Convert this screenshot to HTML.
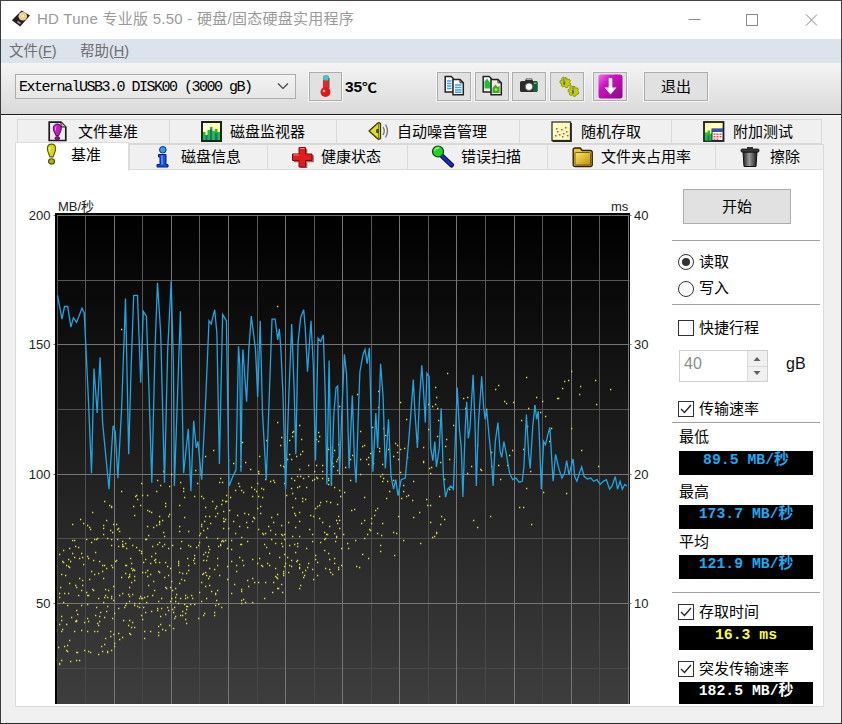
<!DOCTYPE html>
<html lang="zh-CN"><head><meta charset="utf-8"><title>HD Tune</title>
<style>
*{box-sizing:border-box}
html,body{margin:0;padding:0}
body{width:842px;height:724px;background:#f0f0f0;position:relative;overflow:hidden;font-family:"Liberation Sans","Noto Sans CJK SC",sans-serif;font-size:15px;color:#000;line-height:1}
.a{position:absolute;white-space:nowrap}
#title{left:1px;top:1px;width:840px;height:38px;background:#fff}
#ttext{left:37px;top:10px;font-size:15px;color:#9a9a9a;line-height:18px;letter-spacing:.26px}
#menu{left:1px;top:39px;width:840px;height:24px;background:#dde3ec}
.mi{top:43px;font-size:14.5px;color:#6e6e6e;line-height:17px}
#tool{left:1px;top:63px;width:840px;height:51px;background:linear-gradient(#f4f4f4,#d9d9d9)}
#tline{left:1px;top:114px;width:840px;height:1px;background:#1c1c1c}
#tline2{left:1px;top:115px;width:840px;height:1px;background:#fafafa}
.btn{background:#e1e1e1;border:1px solid #adadad;box-shadow:0 0 0 1px #f6f6f6}
#combo{left:15px;top:74px;width:281px;height:25px;background:#fff;border:1px solid #adadad;background:linear-gradient(#f2f2f2,#e6e6e6)}
#combotext{left:19px;top:79px;font-family:"Liberation Mono",monospace;font-size:15px;letter-spacing:-1.5px;line-height:17px;color:#000}
.tab{height:25px;background:#f0f0f0;border:1px solid #d9d9d9;font-size:15px}
.tl{font-size:15px;line-height:18px;color:#000}
#page{left:15px;top:169px;width:809px;height:538px;background:#fff;border:1px solid #dcdcdc}
.lbl{font-size:13px;line-height:14px;color:#222}
.sep{height:1px;background:#a0a0a0;left:672px;width:148px}
.box{left:679px;width:134px;height:24px;background:#000;text-align:center;font-family:"Liberation Mono","Noto Sans CJK SC",monospace;font-weight:bold;font-size:14.8px;line-height:19px;color:#1fa9f0}
.cb{left:678px;width:16px;height:16px;border:1px solid #333;background:#fff}
.rd{left:678px;width:16px;height:16px;border:1px solid #333;background:#fff;border-radius:50%}
.pt{left:699px;font-size:15px;line-height:18px}
</style></head><body>
<div class="a" id="title"></div>
<svg class="a" style="left:11px;top:10px" width="20" height="18" viewBox="0 0 20 18"><path d="M10.600 .4L19 5.400 9.200 16.600 .8 10.200z" fill="#231f20"/><circle cx="11.800" cy="6.200" r="4.300" fill="#e9cf92"/><circle cx="11.800" cy="6.200" r="1.400" fill="#f6e6b8"/><path d="M6.500 11.500l3 2.200" stroke="#a89aa8" stroke-width="1.600"/></svg>
<div class="a" id="ttext">HD Tune 专业版 5.50 - 硬盘/固态硬盘实用程序</div>
<svg class="a" style="left:680px;top:8px" width="150" height="24" viewBox="0 0 150 24" fill="none" stroke="#8a8a8a" stroke-width="1"><path d="M8.5 11.5h12"/><rect x="66.5" y="6.5" width="11" height="11"/><path d="M126 6.500l11 11M137 6.500l-11 11"/></svg>
<div class="a" id="menu"></div>
<div class="a mi" style="left:9px">文件(<u>F</u>)</div>
<div class="a mi" style="left:80px">帮助(<u>H</u>)</div>
<div class="a" id="tool"></div>
<div class="a" id="tline"></div><div class="a" id="tline2"></div>
<div class="a" id="combo"></div>
<div class="a" id="combotext">ExternalUSB3.0 DISK00 (3000 gB)</div>
<svg class="a" style="left:277px;top:82px" width="12" height="8" viewBox="0 0 12 8" fill="none" stroke="#444" stroke-width="1.2"><path d="M1 1.5l5 5 5-5"/></svg>
<div class="a btn" style="left:309px;top:72px;width:33px;height:29px"></div>
<svg class="a" style="left:318px;top:74px" width="16" height="24" viewBox="0 0 16 24"><rect x="5" y="1.5" width="6" height="15" rx="2" fill="#e22"/><rect x="5" y="1.5" width="6" height="5" rx="2" fill="#3cc"/><circle cx="7.5" cy="18" r="5" fill="#e01818"/><circle cx="6" cy="17" r="1.3" fill="#fbb"/><path d="M11 4v10" stroke="#555" stroke-width="1"/></svg>
<div class="a" style="left:345px;top:78px;font-weight:bold;font-size:15.5px;line-height:17px">35<span style="display:inline-block;transform:scale(.97,.82);transform-origin:0 72%">℃</span></div>

<div class="a btn" style="left:437px;top:72px;width:34px;height:29px"></div>
<div class="a btn" style="left:475px;top:72px;width:34px;height:29px"></div>
<div class="a btn" style="left:512px;top:72px;width:34px;height:29px"></div>
<div class="a btn" style="left:550px;top:72px;width:34px;height:29px"></div>
<div class="a btn" style="left:593px;top:72px;width:34px;height:29px"></div>
<div class="a btn" style="left:644px;top:72px;width:64px;height:29px;text-align:center;font-size:15px;line-height:27px">退出</div>
<!-- toolbar icons -->
<svg class="a" style="left:444px;top:75px" width="22" height="22" viewBox="0 0 22 22"><path d="M1.200 1.500h6l2.300 2.300v13.200h-8.300z" fill="#fff" stroke="#222" stroke-width="1.500"/><path d="M3 6h4.500M3 8.500h4.500M3 11h4.500M3 13.500h4.500" stroke="#3c9cf0" stroke-width="1.400"/><path d="M9 4.500h7l3.300 3.300v12h-10.300z" fill="#fff" stroke="#222" stroke-width="1.500"/><path d="M16 4.500v3.300h3.300" fill="none" stroke="#222" stroke-width="1"/><path d="M11 10h6.500M11 12.500h6.500M11 15h6.500M11 17.300h6.500" stroke="#3c9cf0" stroke-width="1.500"/></svg>
<svg class="a" style="left:482px;top:75px" width="22" height="22" viewBox="0 0 22 22"><path d="M1.200 1.500h6l2.300 2.300v13.200h-8.300z" fill="#fff" stroke="#222" stroke-width="1.500"/><path d="M2.500 6.500l2.500-3 3 4v6h-5.500z" fill="#20c030"/><path d="M9 4.500h7l3.300 3.300v12h-10.300z" fill="#f4e6e0" stroke="#222" stroke-width="1.500"/><path d="M16 4.500v3.300h3.300" fill="none" stroke="#222" stroke-width="1"/><path d="M10.500 18v-5l3-3.500 2 2.500 2 -1v7z" fill="#30b030"/><circle cx="14" cy="14.500" r="1.500" fill="#c8d020"/></svg>
<svg class="a" style="left:518px;top:76px" width="22" height="20" viewBox="0 0 22 20"><path d="M2 6.500q0-1.500 1.500-1.500h3.500l1-2.500h6l1 2.500h3q1.500 0 1.500 1.500v8q0 1.500-1.500 1.500h-14.500q-1.500 0-1.500-1.500z" fill="#2b2b2b"/><path d="M15 5h3q1.500 0 1.500 1.500v8q0 1.500-1.500 1.500h-3z" fill="#1f5a38"/><path d="M8.300 3.300h5.400" stroke="#ccc" stroke-width="1"/><circle cx="11" cy="10.700" r="3.700" fill="#fff" stroke="#555" stroke-width="0.800"/><rect x="16" y="6.500" width="2.500" height="1.500" fill="#4c6"/></svg>
<svg class="a" style="left:555px;top:74px" width="26" height="26" viewBox="0 -0.6 22.5 22.5"><g fill="#c3cf00" stroke="#8a9400" stroke-width="0.800"><path d="M8.500 2.500l1.800.3.300 1.600 1.700-.6 1.100 1.500-1 1.300 1.300 1.100-.6 1.700-1.700-.1-.4 1.700-1.800.3-.9-1.500-1.600.8-1.400-1.200.6-1.600-1.600-.7.100-1.800 1.700-.5-.3-1.700 1.500-1 1.300 1.200z"/><path d="M15.500 10l1.800.3.300 1.600 1.700-.6 1.100 1.500-1 1.300 1.300 1.100-.6 1.700-1.700-.1-.4 1.700-1.800.3-.9-1.500-1.600.8-1.400-1.200.6-1.600-1.600-.7.100-1.800 1.700-.5-.3-1.700 1.500-1 1.300 1.200z"/></g><path d="M8 3v6M15.500 10.500v6" stroke="#666" stroke-width="1.600"/><path d="M8 3v3M15.500 10.500v3" stroke="#bbb" stroke-width="0.800"/></svg>
<svg class="a" style="left:598px;top:74px" width="25" height="25" viewBox="0 0 25 25"><defs><linearGradient id="mg" x1="0" y1="0" x2="1" y2="1"><stop offset="0" stop-color="#f070e8"/><stop offset=".35" stop-color="#cc12c0"/><stop offset="1" stop-color="#8a0a86"/></linearGradient></defs><rect x=".5" y=".5" width="24" height="24" rx="2.500" fill="url(#mg)"/><path d="M10.700 4h3.600v9.500h4.200l-6 7-6-7h4.200z" fill="#fff"/></svg>


<!-- tabs row 1 -->
<div class="a tab" style="left:17px;top:119px;width:153px"></div>
<div class="a tab" style="left:169px;top:119px;width:168px"></div>
<div class="a tab" style="left:336px;top:119px;width:184px"></div>
<div class="a tab" style="left:519px;top:119px;width:153px"></div>
<div class="a tab" style="left:671px;top:119px;width:151px"></div>
<!-- tabs row 2 -->
<div class="a tab" style="left:129px;top:144px;width:139px;height:26px"></div>
<div class="a tab" style="left:267px;top:144px;width:141px;height:26px"></div>
<div class="a tab" style="left:407px;top:144px;width:141px;height:26px"></div>
<div class="a tab" style="left:547px;top:144px;width:169px;height:26px"></div>
<div class="a tab" style="left:715px;top:144px;width:109px;height:26px"></div>
<div class="a" id="page"></div>
<div class="a" style="left:15px;top:142px;width:114px;height:29px;background:#fff;border:1px solid #dcdcdc;border-bottom:none"></div>

<div class="a tl" style="left:78px;top:123px">文件基准</div>
<div class="a tl" style="left:230px;top:123px">磁盘监视器</div>
<div class="a tl" style="left:397px;top:123px">自动噪音管理</div>
<div class="a tl" style="left:581px;top:123px">随机存取</div>
<div class="a tl" style="left:733px;top:123px">附加测试</div>
<div class="a tl" style="left:71px;top:146px">基准</div>
<div class="a tl" style="left:181px;top:148px">磁盘信息</div>
<div class="a tl" style="left:321px;top:148px">健康状态</div>
<div class="a tl" style="left:461px;top:148px">错误扫描</div>
<div class="a tl" style="left:601px;top:148px">文件夹占用率</div>
<div class="a tl" style="left:770px;top:148px">擦除</div>
<!-- tab icons -->
<svg class="a" style="left:48px;top:121px" width="20" height="21" viewBox="0 0 20 21"><path d="M1.200 1.200h11.800l4.800 4.800v13.500h-16.600z" fill="#ececec" stroke="#1c1c1c" stroke-width="1.700"/><path d="M13 1.200v4.800h4.800" fill="#bbb" stroke="#1c1c1c" stroke-width="1"/><path d="M9.300 3c2.600 0 4 1.800 4 4.200 0 2.800-1.600 5-2.600 7.400h-2.800c-1-2.400-2.600-4.600-2.600-7.400 0-2.400 1.400-4.200 4-4.200z" fill="#c41cc4" stroke="#4a0a4a" stroke-width="1"/><ellipse cx="9.300" cy="17.300" rx="2.300" ry="1.700" fill="#a010a0" stroke="#3a083a" stroke-width=".9"/><path d="M8 5.500q-1 1.500-.3 4" stroke="#f2a0f2" stroke-width="1" fill="none"/></svg>
<svg class="a" style="left:46px;top:143px" width="11" height="22.500" viewBox="0 0 12 23" preserveAspectRatio="none"><path d="M6 1.200c2.900 0 4.500 2 4.500 4.700 0 3-1.700 5.500-2.800 8.200h-3.400c-1.100-2.700-2.800-5.200-2.800-8.200 0-2.700 1.600-4.700 4.500-4.700z" fill="#d6d61a" stroke="#5a5a00" stroke-width="1.200"/><ellipse cx="6" cy="18.800" rx="3.200" ry="2.700" fill="#b4b410" stroke="#4a4a00" stroke-width="1.200"/><path d="M4.500 4q-1.200 2-.3 5" stroke="#f6f690" stroke-width="1.200" fill="none"/></svg>
<svg class="a" style="left:201px;top:121px" width="21" height="21" viewBox="0 0 21 21"><defs><linearGradient id="my" x1="0" y1="0" x2="1" y2="1"><stop offset="0" stop-color="#fff"/><stop offset=".5" stop-color="#ffffa8"/><stop offset="1" stop-color="#fff"/></linearGradient></defs><rect x="1" y="1" width="19" height="19" fill="url(#my)" stroke="#14241a" stroke-width="1.800"/><path d="M2 19v-8h2.500v3h2v-5h2.500v-3h2.500v4h2.500v-2h2.500v3h2.500v8z" fill="#1cc41c"/><path d="M4.500 19v-5h2v5zM9 19v-11h2v11zM14 19v-7h2.500v7z" fill="#2464b8"/><rect x="1" y="1" width="19" height="19" fill="none" stroke="#14241a" stroke-width="1.800"/></svg>
<svg class="a" style="left:368px;top:121px" width="22" height="20" viewBox="0 0 22 20"><path d="M1 10l9.500-8.500 2 .8v15.400l-2 .8z" fill="#dede22" stroke="#3a3a00" stroke-width="1.300" stroke-linejoin="round"/><path d="M10.500 1.500v17" stroke="#77770a" stroke-width="1"/><ellipse cx="9.500" cy="10" rx="1.500" ry="2.300" fill="#444"/><path d="M15 6q2.500 4 0 8M17.500 3.500q4 6.500 0 13" fill="none" stroke="#777" stroke-width="1.400"/></svg>
<svg class="a" style="left:551px;top:121px" width="21" height="21" viewBox="0 0 21 21"><rect x="1" y="1" width="18.500" height="18.500" fill="#ffffc4" stroke="#333" stroke-width="1.300"/><path d="M20 2v18.300h-18.500" fill="none" stroke="#222" stroke-width="1.700"/><g fill="#e04020"><rect x="4" y="14" width="1.500" height="1.500"/><rect x="6" y="10" width="1.500" height="1.500"/><rect x="8" y="13" width="1.500" height="1.500"/><rect x="10" y="8" width="1.500" height="1.500"/><rect x="12" y="12" width="1.500" height="1.500"/><rect x="14" y="6" width="1.500" height="1.500"/><rect x="15" y="10" width="1.500" height="1.500"/><rect x="11" y="15" width="1.500" height="1.500"/><rect x="5" y="7" width="1.500" height="1.500"/><rect x="16" y="14" width="1.500" height="1.500"/></g></svg>
<svg class="a" style="left:703px;top:121px" width="22" height="21" viewBox="0 0 22 21"><rect x="1" y="1" width="19.500" height="19" fill="#ffffb8" stroke="#1c1c1c" stroke-width="1.800"/><path d="M2 19.500v-8h2.500v-2h2.500v3h2v7z" fill="#1cc41c"/><path d="M4.500 19.500v-5h2v5z" fill="#2464b8"/><rect x="9" y="8" width="11" height="11.500" fill="#fff" stroke="#223" stroke-width="1"/><rect x="9" y="8" width="11" height="3" fill="#2850c0"/><g fill="#e05050"><rect x="10.500" y="12.500" width="2" height="1.500"/><rect x="13.500" y="12.500" width="2" height="1.500"/><rect x="16.500" y="12.500" width="2" height="1.500"/><rect x="10.500" y="15" width="2" height="1.500"/><rect x="13.500" y="15" width="2" height="1.500"/><rect x="16.500" y="15" width="2" height="1.500"/><rect x="10.500" y="17.500" width="2" height="1.300"/><rect x="13.500" y="17.500" width="2" height="1.300"/></g></svg>
<svg class="a" style="left:156px;top:146px" width="13" height="22" viewBox="0 0 13 22"><circle cx="6.800" cy="3.800" r="3.300" fill="#2aa0f0" stroke="#0a2a80" stroke-width="1"/><path d="M2.500 8.500h7.500v10h2v2.500h-11v-2.500h3v-7.500h-1.500z" fill="#1850d8" stroke="#081c70" stroke-width="1" stroke-linejoin="round"/><path d="M6 9.500v9" stroke="#50a0ff" stroke-width="1.500"/></svg>
<svg class="a" style="left:291px;top:146px" width="23" height="22" viewBox="0 0 23 22"><path d="M8.500 2h7v6.500h6.500v7h-6.500v6.500h-7v-6.500h-6.500v-7h6.500z" fill="#5a0a0a" transform="translate(.8 .8)" opacity=".6"/><path d="M8 1.500h6.500v6.500h6.500v6.500h-6.500v6.500h-6.500v-6.500h-6.500v-6.500h6.500z" fill="#e21c1c" stroke="#7a0c0c" stroke-width="1"/><path d="M9 2.500h4.500M2.500 9h5.500" stroke="#ff8a8a" stroke-width="1"/></svg>
<svg class="a" style="left:431px;top:145px" width="24" height="23" viewBox="0 0 24 23"><path d="M10.500 10.500l10 9.500" stroke="#0a0a50" stroke-width="5" stroke-linecap="round"/><path d="M10.500 10.500l10 9.500" stroke="#1c2cb8" stroke-width="3" stroke-linecap="round"/><circle cx="7" cy="6.500" r="5.500" fill="#22d422" stroke="#0a400a" stroke-width="1.200"/><path d="M3.500 5.500q1.500-3 4.500-2.500" stroke="#b0ffb0" stroke-width="1.300" fill="none"/></svg>
<svg class="a" style="left:572px;top:146px" width="22" height="22" viewBox="0 0 22 22"><defs><linearGradient id="fg" x1="0" y1="0" x2="1" y2="1"><stop offset="0" stop-color="#fae66a"/><stop offset="1" stop-color="#c48e08"/></linearGradient></defs><path d="M1.200 4q0-2 2-2h5l2 2.500h8q2 0 2 2v12q0 2-2 2h-15q-2 0-2-2z" fill="#e8c83a" stroke="#2a2000" stroke-width="1.400"/><rect x="3" y="6.500" width="15.500" height="12.500" rx="1" fill="url(#fg)" stroke="#5a4400" stroke-width=".8"/></svg>
<svg class="a" style="left:740px;top:146px" width="20" height="22" viewBox="0 0 20 22"><defs><linearGradient id="tg" x1="0" y1="0" x2="1" y2="0"><stop offset="0" stop-color="#222"/><stop offset=".45" stop-color="#9a9a9a"/><stop offset="1" stop-color="#1a1a1a"/></linearGradient></defs><path d="M3 6h14l-1 14.500h-12z" fill="url(#tg)" stroke="#111" stroke-width="1"/><rect x="1" y="3" width="18" height="3" rx="1" fill="#3a3a3a" stroke="#111" stroke-width=".8"/><rect x="7" y="1" width="6" height="2.300" fill="#333"/></svg>


<!-- chart labels -->
<div class="a lbl" style="left:58px;top:200px">MB/秒</div>
<div class="a lbl" style="left:611px;top:200px">ms</div>
<div class="a lbl" style="left:20.500px;top:209px;width:30px;text-align:right">200</div>
<div class="a lbl" style="left:20.500px;top:338px;width:30px;text-align:right">150</div>
<div class="a lbl" style="left:20.500px;top:468px;width:30px;text-align:right">100</div>
<div class="a lbl" style="left:20.500px;top:597px;width:30px;text-align:right">50</div>
<div class="a lbl" style="left:634px;top:209px">40</div>
<div class="a lbl" style="left:634px;top:338px">30</div>
<div class="a lbl" style="left:634px;top:468px">20</div>
<div class="a lbl" style="left:634px;top:597px">10</div>
<svg id="chart" width="582" height="491" viewBox="52 213 582 491" style="position:absolute;left:52px;top:213px">
<defs><linearGradient id="bg" x1="0" y1="0" x2="0" y2="1"><stop offset="0" stop-color="#000"/><stop offset="1" stop-color="#3e3e3e"/></linearGradient><linearGradient id="mn" gradientUnits="userSpaceOnUse" x1="0" y1="215" x2="0" y2="704"><stop offset="0" stop-color="#5a5a5a"/><stop offset="1" stop-color="#474747"/></linearGradient></defs>
<rect x="55" y="213" width="575" height="491" fill="#000"/>
<rect x="57" y="215" width="572.5" height="491" fill="url(#bg)"/>
<path d="M57.5 215V704M85.5 215V704M142.5 215V704M199.5 215V704M257.5 215V704M314.5 215V704M371.5 215V704M428.5 215V704M485.5 215V704M542.5 215V704M599.5 215V704M57 280.5H629.5M57 409.5H629.5M57 538.5H629.5M57 668.5H629.5" stroke="url(#mn)" stroke-width="1" fill="none"/>
<path d="M114.5 215V704M171.5 215V704M228.5 215V704M285.5 215V704M342.5 215V704M399.5 215V704M456.5 215V704M514.5 215V704M571.5 215V704M628.5 215V704M57 215.5H629.5M57 344.5H629.5M57 474.5H629.5M57 603.5H629.5M53.5 215.5H55M53.5 344.5H55M53.5 474.5H55M53.5 603.5H55M630 215.5h1.5M630 344.5h1.5M630 474.5h1.5M630 603.5h1.5" stroke="#767676" stroke-width="1" fill="none"/>
<path d="M151 611.5h1.3M79 578.5h1.3M75 585.5h1.3M182 615.5h1.3M180 482.5h1.3M122 546.5h1.3M338 567.5h1.3M141 615.5h1.3M147 495.5h1.3M225 501.5h1.3M215 605.5h1.3M117 529.5h1.3M148 535.5h1.3M144 597.5h1.3M209 568.5h1.3M92 589.5h1.3M102 571.5h1.3M250 469.5h1.3M309 529.5h1.3M229 510.5h1.3M299 469.5h1.3M259 456.5h1.3M169 514.5h1.3M191 595.5h1.3M75 546.5h1.3M129 576.5h1.3M81 590.5h1.3M312 534.5h1.3M161 608.5h1.3M125 605.5h1.3M227 566.5h1.3M178 563.5h1.3M332 453.5h1.3M235 490.5h1.3M316 439.5h1.3M173 612.5h1.3M76 652.5h1.3M105 595.5h1.3M58 647.5h1.3M162 629.5h1.3M234 584.5h1.3M158 571.5h1.3M302 501.5h1.3M87 604.5h1.3M296 561.5h1.3M331 483.5h1.3M214 612.5h1.3M339 528.5h1.3M106 520.5h1.3M282 535.5h1.3M291 459.5h1.3M207 556.5h1.3M66 624.5h1.3M257 563.5h1.3M114 613.5h1.3M316 465.5h1.3M82 585.5h1.3M284 534.5h1.3M337 504.5h1.3M330 447.5h1.3M94 631.5h1.3M289 565.5h1.3M339 456.5h1.3M215 593.5h1.3M337 459.5h1.3M326 501.5h1.3M295 552.5h1.3M142 598.5h1.3M132 570.5h1.3M319 518.5h1.3M225 519.5h1.3M63 602.5h1.3M59 554.5h1.3M194 496.5h1.3M152 546.5h1.3M283 575.5h1.3M129 596.5h1.3M204 521.5h1.3M320 502.5h1.3M203 530.5h1.3M188 531.5h1.3M328 478.5h1.3M299 564.5h1.3M185 613.5h1.3M79 558.5h1.3M315 555.5h1.3M247 580.5h1.3M336 537.5h1.3M172 545.5h1.3M297 560.5h1.3M206 560.5h1.3M149 511.5h1.3M217 538.5h1.3M153 527.5h1.3M76 621.5h1.3M282 546.5h1.3M179 583.5h1.3M322 478.5h1.3M84 650.5h1.3M180 615.5h1.3M240 466.5h1.3M304 575.5h1.3M188 565.5h1.3M324 532.5h1.3M209 576.5h1.3M104 644.5h1.3M148 585.5h1.3M141 553.5h1.3M158 632.5h1.3M62 561.5h1.3M112 567.5h1.3M89 527.5h1.3M200 474.5h1.3M203 560.5h1.3M261 488.5h1.3M158 626.5h1.3M78 547.5h1.3M105 638.5h1.3M308 465.5h1.3M128 594.5h1.3M103 578.5h1.3M334 533.5h1.3M147 576.5h1.3M168 548.5h1.3M116 560.5h1.3M134 627.5h1.3M70 661.5h1.3M125 543.5h1.3M273 480.5h1.3M310 515.5h1.3M341 548.5h1.3M243 599.5h1.3M314 471.5h1.3M291 566.5h1.3M203 498.5h1.3M67 645.5h1.3M88 558.5h1.3M253 517.5h1.3M287 459.5h1.3M212 501.5h1.3M269 553.5h1.3M134 515.5h1.3M270 530.5h1.3M254 489.5h1.3M100 612.5h1.3M145 539.5h1.3M75 621.5h1.3M257 483.5h1.3M206 537.5h1.3M92 512.5h1.3M339 406.5h1.3M190 546.5h1.3M118 546.5h1.3M208 578.5h1.3M198 618.5h1.3M199 542.5h1.3M98 598.5h1.3M299 588.5h1.3M299 567.5h1.3M263 534.5h1.3M345 467.5h1.3M181 579.5h1.3M87 525.5h1.3M327 534.5h1.3M205 586.5h1.3M332 463.5h1.3M328 480.5h1.3M72 553.5h1.3M274 482.5h1.3M72 524.5h1.3M194 563.5h1.3M270 481.5h1.3M218 546.5h1.3M104 617.5h1.3M201 582.5h1.3M344 492.5h1.3M113 634.5h1.3M84 622.5h1.3M221 541.5h1.3M208 552.5h1.3M76 620.5h1.3M94 574.5h1.3M306 548.5h1.3M129 574.5h1.3M332 574.5h1.3M262 497.5h1.3M170 587.5h1.3M102 565.5h1.3M328 449.5h1.3M277 514.5h1.3M69 548.5h1.3M322 465.5h1.3M95 615.5h1.3M258 582.5h1.3M209 516.5h1.3M122 541.5h1.3M145 559.5h1.3M243 565.5h1.3M334 450.5h1.3M64 593.5h1.3M179 583.5h1.3M324 539.5h1.3M155 562.5h1.3M115 561.5h1.3M336 520.5h1.3M124 607.5h1.3M143 607.5h1.3M178 603.5h1.3M119 639.5h1.3M171 598.5h1.3M272 592.5h1.3M167 566.5h1.3M107 651.5h1.3M159 572.5h1.3M294 513.5h1.3M194 558.5h1.3M113 586.5h1.3M67 605.5h1.3M278 588.5h1.3M76 610.5h1.3M333 466.5h1.3M264 544.5h1.3M59 664.5h1.3M194 555.5h1.3M181 541.5h1.3M111 545.5h1.3M150 574.5h1.3M81 630.5h1.3M129 633.5h1.3M217 558.5h1.3M312 569.5h1.3M201 496.5h1.3M125 573.5h1.3M251 487.5h1.3M299 536.5h1.3M165 503.5h1.3M129 601.5h1.3M312 480.5h1.3M172 590.5h1.3M246 522.5h1.3M299 425.5h1.3M142 619.5h1.3M337 470.5h1.3M165 587.5h1.3M329 559.5h1.3M236 571.5h1.3M99 621.5h1.3M230 497.5h1.3M61 620.5h1.3M111 596.5h1.3M286 495.5h1.3M87 595.5h1.3M241 591.5h1.3M258 529.5h1.3M146 539.5h1.3M178 565.5h1.3M267 563.5h1.3M317 506.5h1.3M175 601.5h1.3M216 600.5h1.3M164 544.5h1.3M139 550.5h1.3M89 579.5h1.3M335 541.5h1.3M329 569.5h1.3M169 486.5h1.3M284 554.5h1.3M301 439.5h1.3M121 577.5h1.3M168 610.5h1.3M266 440.5h1.3M219 482.5h1.3M299 568.5h1.3M216 506.5h1.3M179 526.5h1.3M247 527.5h1.3M65 575.5h1.3M126 565.5h1.3M194 604.5h1.3M182 611.5h1.3M204 613.5h1.3M82 580.5h1.3M203 554.5h1.3M97 623.5h1.3M199 592.5h1.3M325 568.5h1.3M275 568.5h1.3M137 499.5h1.3M202 574.5h1.3M150 631.5h1.3M104 501.5h1.3M283 573.5h1.3M241 544.5h1.3M217 513.5h1.3M88 595.5h1.3M134 580.5h1.3M185 595.5h1.3M72 540.5h1.3M241 490.5h1.3M59 663.5h1.3M235 533.5h1.3M315 559.5h1.3M245 602.5h1.3M160 616.5h1.3M122 544.5h1.3M117 539.5h1.3M97 631.5h1.3M241 537.5h1.3M61 574.5h1.3M159 521.5h1.3M327 447.5h1.3M317 575.5h1.3M175 588.5h1.3M282 592.5h1.3M328 553.5h1.3M233 521.5h1.3M291 560.5h1.3M144 631.5h1.3M283 466.5h1.3M300 454.5h1.3M271 517.5h1.3M88 621.5h1.3M154 590.5h1.3M183 488.5h1.3M134 605.5h1.3M62 629.5h1.3M271 539.5h1.3M152 595.5h1.3M239 486.5h1.3M339 490.5h1.3M258 473.5h1.3M146 602.5h1.3M80 519.5h1.3M66 650.5h1.3M157 610.5h1.3M70 561.5h1.3M258 471.5h1.3M227 548.5h1.3M293 431.5h1.3M307 567.5h1.3M90 652.5h1.3M291 478.5h1.3M239 557.5h1.3M86 539.5h1.3M150 563.5h1.3M132 594.5h1.3M164 577.5h1.3M203 615.5h1.3M183 491.5h1.3M260 506.5h1.3M305 570.5h1.3M107 652.5h1.3M277 422.5h1.3M199 535.5h1.3M111 565.5h1.3M297 543.5h1.3M139 603.5h1.3M201 601.5h1.3M81 605.5h1.3M171 474.5h1.3M313 579.5h1.3M134 576.5h1.3M125 565.5h1.3M275 534.5h1.3M103 528.5h1.3M184 604.5h1.3M312 541.5h1.3M145 612.5h1.3M129 587.5h1.3M104 597.5h1.3M338 444.5h1.3M334 558.5h1.3M340 496.5h1.3M241 589.5h1.3M169 625.5h1.3M285 469.5h1.3M239 526.5h1.3M231 540.5h1.3M319 505.5h1.3M273 522.5h1.3M265 479.5h1.3M188 570.5h1.3M86 592.5h1.3M263 489.5h1.3M180 548.5h1.3M175 597.5h1.3M281 525.5h1.3M338 569.5h1.3M104 565.5h1.3M223 518.5h1.3M205 507.5h1.3M208 546.5h1.3M118 528.5h1.3M277 574.5h1.3M160 624.5h1.3M173 628.5h1.3M179 505.5h1.3M134 603.5h1.3M328 484.5h1.3M288 522.5h1.3M95 552.5h1.3M219 575.5h1.3M159 522.5h1.3M292 507.5h1.3M215 594.5h1.3M160 485.5h1.3M166 588.5h1.3M111 650.5h1.3M139 598.5h1.3M196 547.5h1.3M247 541.5h1.3M303 577.5h1.3M318 441.5h1.3M297 476.5h1.3M61 631.5h1.3M99 616.5h1.3M157 608.5h1.3M285 563.5h1.3M233 463.5h1.3M257 508.5h1.3M184 580.5h1.3M98 573.5h1.3M192 598.5h1.3M201 526.5h1.3M60 587.5h1.3M299 521.5h1.3M334 563.5h1.3M241 603.5h1.3M254 518.5h1.3M68 559.5h1.3M155 553.5h1.3M279 557.5h1.3M179 531.5h1.3M142 495.5h1.3M203 573.5h1.3M338 457.5h1.3M153 581.5h1.3M226 501.5h1.3M69 583.5h1.3M144 638.5h1.3M322 471.5h1.3M284 483.5h1.3M258 496.5h1.3M119 531.5h1.3M277 578.5h1.3M69 567.5h1.3M294 544.5h1.3M179 572.5h1.3M242 442.5h1.3M221 607.5h1.3M291 488.5h1.3M186 623.5h1.3M228 528.5h1.3M87 556.5h1.3M102 651.5h1.3M254 582.5h1.3M83 523.5h1.3M63 562.5h1.3M269 565.5h1.3M280 465.5h1.3M238 483.5h1.3M326 534.5h1.3M264 598.5h1.3M245 462.5h1.3M147 510.5h1.3M305 499.5h1.3M163 532.5h1.3M252 578.5h1.3M162 520.5h1.3M178 561.5h1.3M329 526.5h1.3M338 516.5h1.3M339 520.5h1.3M313 516.5h1.3M231 561.5h1.3M133 569.5h1.3M292 432.5h1.3M297 487.5h1.3M302 572.5h1.3M287 557.5h1.3M325 538.5h1.3M252 521.5h1.3M131 563.5h1.3M289 454.5h1.3M224 521.5h1.3M227 579.5h1.3M110 530.5h1.3M220 544.5h1.3M101 646.5h1.3M165 614.5h1.3M284 566.5h1.3M157 544.5h1.3M68 593.5h1.3M133 506.5h1.3M330 572.5h1.3M110 636.5h1.3M218 604.5h1.3M172 609.5h1.3M132 545.5h1.3M332 456.5h1.3M187 597.5h1.3M343 534.5h1.3M131 582.5h1.3M318 432.5h1.3M284 467.5h1.3M341 565.5h1.3M275 543.5h1.3M276 577.5h1.3M132 622.5h1.3M106 611.5h1.3M252 602.5h1.3M114 643.5h1.3M121 491.5h1.3M186 609.5h1.3M300 476.5h1.3M156 525.5h1.3M122 637.5h1.3M217 590.5h1.3M134 570.5h1.3M136 495.5h1.3M106 568.5h1.3M317 562.5h1.3M74 631.5h1.3M140 596.5h1.3M163 471.5h1.3M141 483.5h1.3M266 547.5h1.3M63 550.5h1.3M98 654.5h1.3M209 585.5h1.3M320 542.5h1.3M98 625.5h1.3M262 566.5h1.3M83 564.5h1.3M137 606.5h1.3M261 565.5h1.3M268 526.5h1.3M74 540.5h1.3M300 585.5h1.3M195 470.5h1.3M111 506.5h1.3M105 589.5h1.3M59 593.5h1.3M206 598.5h1.3M292 436.5h1.3M262 533.5h1.3M76 587.5h1.3M210 523.5h1.3M336 536.5h1.3M87 618.5h1.3M67 651.5h1.3M114 646.5h1.3M223 521.5h1.3M88 651.5h1.3M200 533.5h1.3M93 590.5h1.3M228 460.5h1.3M222 482.5h1.3M295 515.5h1.3M209 549.5h1.3M281 534.5h1.3M154 560.5h1.3M289 440.5h1.3M206 575.5h1.3M240 544.5h1.3M78 595.5h1.3M64 646.5h1.3M281 437.5h1.3M242 560.5h1.3M136 547.5h1.3M236 565.5h1.3M182 573.5h1.3M93 560.5h1.3M205 572.5h1.3M211 591.5h1.3M96 607.5h1.3M141 598.5h1.3M215 516.5h1.3M116 524.5h1.3M215 508.5h1.3M147 596.5h1.3M205 552.5h1.3M61 616.5h1.3M126 548.5h1.3M140 505.5h1.3M77 652.5h1.3M184 497.5h1.3M123 620.5h1.3M159 516.5h1.3M302 451.5h1.3M283 571.5h1.3M59 597.5h1.3M222 540.5h1.3M308 476.5h1.3M188 545.5h1.3M142 572.5h1.3M168 575.5h1.3M302 498.5h1.3M111 598.5h1.3M223 511.5h1.3M322 522.5h1.3M299 512.5h1.3M61 660.5h1.3M201 526.5h1.3M207 528.5h1.3M170 568.5h1.3M159 542.5h1.3M165 562.5h1.3M223 528.5h1.3M237 515.5h1.3M107 597.5h1.3M295 498.5h1.3M315 508.5h1.3M141 551.5h1.3M112 618.5h1.3M231 549.5h1.3M241 600.5h1.3M284 539.5h1.3M59 624.5h1.3M226 495.5h1.3M201 524.5h1.3M244 513.5h1.3M223 541.5h1.3M103 525.5h1.3M87 631.5h1.3M294 480.5h1.3M76 660.5h1.3M151 512.5h1.3M107 606.5h1.3M317 478.5h1.3M187 558.5h1.3M314 479.5h1.3M184 517.5h1.3M71 617.5h1.3M292 536.5h1.3M334 487.5h1.3M128 577.5h1.3M122 593.5h1.3M197 483.5h1.3M108 590.5h1.3M337 523.5h1.3M91 571.5h1.3M174 618.5h1.3M295 527.5h1.3M113 600.5h1.3M68 566.5h1.3M103 534.5h1.3M135 496.5h1.3M185 598.5h1.3M265 533.5h1.3M118 608.5h1.3M96 539.5h1.3M316 477.5h1.3M129 538.5h1.3M308 563.5h1.3M214 569.5h1.3M168 516.5h1.3M147 570.5h1.3M109 505.5h1.3M248 586.5h1.3M162 546.5h1.3M77 614.5h1.3M94 539.5h1.3M174 607.5h1.3M66 565.5h1.3M159 562.5h1.3M259 558.5h1.3M159 524.5h1.3M91 542.5h1.3M69 640.5h1.3M145 572.5h1.3M147 526.5h1.3M299 486.5h1.3M131 568.5h1.3M158 635.5h1.3M281 543.5h1.3M303 478.5h1.3M128 625.5h1.3M118 633.5h1.3M171 581.5h1.3M330 502.5h1.3M256 491.5h1.3M74 557.5h1.3M205 456.5h1.3M277 588.5h1.3M289 545.5h1.3M336 461.5h1.3M130 634.5h1.3M176 594.5h1.3M97 538.5h1.3M126 603.5h1.3M186 573.5h1.3M99 561.5h1.3M292 493.5h1.3M107 538.5h1.3M190 604.5h1.3M161 598.5h1.3M139 607.5h1.3M187 606.5h1.3M193 560.5h1.3M79 660.5h1.3M273 582.5h1.3M339 473.5h1.3M198 545.5h1.3M214 615.5h1.3M243 492.5h1.3M129 620.5h1.3M280 445.5h1.3M111 539.5h1.3M324 550.5h1.3M296 456.5h1.3M111 507.5h1.3M164 536.5h1.3M297 546.5h1.3M221 504.5h1.3M260 513.5h1.3M103 602.5h1.3M81 553.5h1.3M185 619.5h1.3M113 524.5h1.3M299 512.5h1.3M248 514.5h1.3M155 559.5h1.3M295 428.5h1.3M143 562.5h1.3M158 601.5h1.3M151 556.5h1.3M319 436.5h1.3M252 496.5h1.3M222 500.5h1.3M157 480.5h1.3M112 532.5h1.3M82 557.5h1.3M225 540.5h1.3M220 545.5h1.3M110 631.5h1.3M131 627.5h1.3M130 558.5h1.3M123 546.5h1.3M205 516.5h1.3M175 616.5h1.3M306 487.5h1.3M275 576.5h1.3M265 582.5h1.3M170 601.5h1.3M220 478.5h1.3M281 584.5h1.3M165 630.5h1.3M119 595.5h1.3M180 598.5h1.3M156 491.5h1.3M165 506.5h1.3M231 593.5h1.3M288 572.5h1.3M252 559.5h1.3M186 606.5h1.3M90 529.5h1.3M217 565.5h1.3M167 607.5h1.3M213 450.5h1.3M381 535.5h1.3M437 408.5h1.3M364 497.5h1.3M362 554.5h1.3M368 558.5h1.3M383 478.5h1.3M386 498.5h1.3M406 496.5h1.3M393 532.5h1.3M374 515.5h1.3M373 463.5h1.3M445 446.5h1.3M437 436.5h1.3M375 510.5h1.3M423 461.5h1.3M382 464.5h1.3M351 510.5h1.3M449 459.5h1.3M371 523.5h1.3M359 567.5h1.3M393 480.5h1.3M377 533.5h1.3M377 508.5h1.3M403 540.5h1.3M406 419.5h1.3M436 532.5h1.3M439 496.5h1.3M347 543.5h1.3M419 512.5h1.3M366 459.5h1.3M413 517.5h1.3M446 439.5h1.3M430 522.5h1.3M401 498.5h1.3M413 481.5h1.3M380 551.5h1.3M350 459.5h1.3M397 452.5h1.3M394 555.5h1.3M404 448.5h1.3M380 545.5h1.3M360 431.5h1.3M430 473.5h1.3M407 457.5h1.3M408 495.5h1.3M372 427.5h1.3M426 499.5h1.3M444 519.5h1.3M395 443.5h1.3M383 428.5h1.3M348 548.5h1.3M398 459.5h1.3M444 479.5h1.3M364 538.5h1.3M427 505.5h1.3M397 445.5h1.3M429 468.5h1.3M440 524.5h1.3M352 455.5h1.3M436 533.5h1.3M388 449.5h1.3M371 518.5h1.3M369 529.5h1.3M412 500.5h1.3M368 464.5h1.3M436 397.5h1.3M424 407.5h1.3M380 476.5h1.3M362 446.5h1.3M393 456.5h1.3M367 534.5h1.3M449 489.5h1.3M357 394.5h1.3M441 516.5h1.3M355 540.5h1.3M354 509.5h1.3M420 543.5h1.3M428 429.5h1.3M398 516.5h1.3M356 566.5h1.3M378 407.5h1.3M396 533.5h1.3M364 445.5h1.3M423 462.5h1.3M382 474.5h1.3M382 523.5h1.3M438 420.5h1.3M364 520.5h1.3M350 480.5h1.3M403 491.5h1.3M417 438.5h1.3M403 485.5h1.3M389 491.5h1.3M360 459.5h1.3M372 456.5h1.3M370 530.5h1.3M434 536.5h1.3M379 448.5h1.3M378 391.5h1.3M423 447.5h1.3M370 453.5h1.3M385 435.5h1.3M400 449.5h1.3M379 451.5h1.3M368 457.5h1.3M440 462.5h1.3M400 472.5h1.3M360 474.5h1.3M430 505.5h1.3M431 467.5h1.3M432 537.5h1.3M432 406.5h1.3M361 523.5h1.3M382 481.5h1.3M387 481.5h1.3M506 403.5h1.3M498 465.5h1.3M467 473.5h1.3M477 527.5h1.3M490 516.5h1.3M500 479.5h1.3M467 397.5h1.3M495 389.5h1.3M480 469.5h1.3M481 470.5h1.3M471 466.5h1.3M507 465.5h1.3M491 466.5h1.3M473 520.5h1.3M477 445.5h1.3M513 402.5h1.3M491 452.5h1.3M509 455.5h1.3M512 450.5h1.3M486 409.5h1.3M453 425.5h1.3M504 401.5h1.3M121 329.5h1.3M277 306.5h1.3M447 373.5h1.3M498 385.5h1.3M526 377.5h1.3M536 397.5h1.3M542 401.5h1.3M557 398.5h1.3M564 381.5h1.3M562 388.5h1.3M568 380.5h1.3M571 371.5h1.3M580 386.5h1.3M579 394.5h1.3M595 380.5h1.3M596 404.5h1.3M610 389.5h1.3M435 387.5h1.3M436 397.5h1.3M435 404.5h1.3M428 404.5h1.3M400 402.5h1.3M463 398.5h1.3M465 408.5h1.3M528 408.5h1.3M534 406.5h1.3M540 412.5h1.3M558 398.5h1.3M571 428.5h1.3M581 450.5h1.3M598 466.5h1.3M530 471.5h1.3M543 492.5h1.3M566 493.5h1.3M531 524.5h1.3M523 507.5h1.3M519 507.5h1.3M526 488.5h1.3M527 426.5h1.3M521 420.5h1.3M545 416.5h1.3M551 428.5h1.3M523 449.5h1.3M549 441.5h1.3" stroke="#dede42" stroke-width="1.3" fill="none"/>
<polyline points="57.5,295.4 62.0,319.2 64.5,306.5 67.7,306.5 70.9,327.2 73.4,317.7 76.6,322.4 82.0,308.1 84.2,312.9 85.8,344.7 88.3,397.1 91.5,473.3 94.0,368.5 97.2,413.0 100.1,357.4 102.6,422.5 109.0,489.2 113.1,425.7 115.3,432.0 117.9,478.1 121.7,406.6 125.5,298.6 128.7,454.3 131.2,365.3 133.7,295.4 137.5,295.4 140.7,382.8 143.3,311.3 146.4,316.1 148.7,381.2 151.8,482.8 155.0,349.4 157.5,282.7 160.7,333.5 164.5,482.8 167.7,349.4 171.2,281.1 173.4,365.3 174.4,486.0 180.4,311.3 183.6,473.3 188.3,428.8 190.9,491.1 193.7,420.9 196.3,447.9 197.9,441.5 201.7,479.7 205.8,397.1 209.0,320.8 211.2,324.0 214.7,309.7 216.9,333.5 219.4,464.1 222.6,314.5 226.4,320.8 229.0,486.0 232.8,476.5 236.0,470.1 238.5,346.2 239.8,365.3 241.0,471.7 242.3,365.3 242.9,349.4 246.6,401.8 248.8,349.4 251.3,316.1 253.9,336.7 255.5,349.4 257.7,397.1 260.2,320.8 262.5,413.0 266.3,479.7 269.8,381.2 272.0,319.2 275.2,319.2 277.7,339.9 279.3,328.8 280.9,349.4 283.1,397.1 285.6,489.2 288.8,397.1 291.7,324.0 294.2,390.7 295.8,454.3 298.0,343.1 300.6,317.7 303.7,309.7 305.3,328.8 307.5,371.7 311.0,320.8 313.3,365.3 315.5,460.6 318.0,338.3 320.6,341.5 323.4,335.1 325.3,397.1 326.9,484.4 329.1,360.5 331.3,486.0 333.9,413.0 336.1,387.5 337.7,386.0 339.6,473.3 341.8,413.0 344.4,354.2 346.6,374.8 349.1,468.5 352.3,395.5 354.5,460.6 356.1,482.8 358.7,403.4 359.9,371.7 363.1,354.2 365.0,349.4 367.2,363.7 369.4,347.8 371.3,422.5 372.9,471.7 375.8,413.0 377.7,447.9 380.6,363.7 383.1,397.1 385.3,468.5 388.5,419.3 391.0,476.5 393.6,489.2 395.8,479.7 398.0,495.6 401.2,479.7 405.3,478.1 408.5,443.1 410.7,416.1 413.3,379.6 414.8,409.8 417.4,447.9 419.6,397.1 421.8,365.3 423.7,393.9 425.3,422.5 426.9,373.2 429.1,376.4 430.7,447.9 432.9,460.6 434.8,441.5 436.4,467.0 439.3,447.9 441.2,408.2 443.4,476.5 445.5,497.1 447.7,489.2 450.9,486.0 453.4,489.2 455.0,447.9 457.2,387.5 459.4,428.8 461.3,447.9 462.9,497.1 465.2,428.8 466.7,401.8 468.3,438.4 469.9,428.8 473.1,374.8 475.0,422.5 476.3,486.0 478.5,422.5 481.7,376.4 483.6,406.6 485.2,419.3 486.7,409.8 489.0,435.2 491.5,460.6 493.1,486.0 495.3,441.5 497.9,422.5 500.1,451.1 501.7,457.4 503.9,441.5 506.4,454.3 509.6,473.3 512.8,479.7 516.0,478.1 519.1,482.2 522.3,481.3 523.9,467.0 526.4,414.5 528.7,454.3 530.2,468.5 532.8,425.7 535.0,405.0 536.6,419.3 538.2,411.4 539.8,447.9 541.3,489.2 543.6,441.5 545.5,444.7 547.7,435.2 549.9,427.3 551.8,460.6 553.1,481.3 555.6,454.3 558.8,468.5 562.0,478.1 564.5,473.3 566.7,460.6 569.0,474.9 570.6,468.5 573.1,459.0 574.7,476.5 576.9,481.3 579.4,473.3 581.7,467.0 584.2,476.5 587.4,479.0 590.6,478.1 593.7,481.3 596.9,479.7 600.1,484.4 603.3,481.3 606.4,479.7 609.6,489.2 612.1,486.0 615.3,476.5 617.5,489.2 620.1,481.3 622.3,489.2 624.8,484.4 627.1,486.0" fill="none" stroke="#21a4e2" stroke-width="1.3" stroke-linejoin="miter"/>
</svg>

<!-- right panel -->
<div class="a btn" style="left:683px;top:189px;width:108px;height:35px;text-align:center;line-height:33px;font-size:15px;box-shadow:none">开始</div>
<div class="a sep" style="top:240px"></div>
<div class="a rd" style="top:254px"></div><div class="a" style="left:682px;top:258px;width:8px;height:8px;border-radius:50%;background:#333"></div>
<div class="a pt" style="top:253px">读取</div>
<div class="a rd" style="top:281px"></div>
<div class="a pt" style="top:279px">写入</div>
<div class="a sep" style="top:304px"></div>
<div class="a cb" style="top:320px"></div>
<div class="a pt" style="top:319px">快捷行程</div>
<div class="a" style="left:679px;top:350px;width:89px;height:32px;background:#fff;border:1px solid #cfcfcf"></div>
<div class="a" style="left:747px;top:351px;width:20px;height:30px;background:#f0f0f0;border-left:1px solid #dadada"></div>
<div class="a" style="left:747px;top:366px;width:20px;height:1px;background:#dadada"></div>
<svg class="a" style="left:752px;top:355px" width="10" height="22" viewBox="0 0 10 22" fill="#606060"><path d="M1.5 6L5 2l3.500 4zM1.500 16L5 20l3.500-4z"/></svg>
<div class="a" style="left:684px;top:355px;font-size:16px;line-height:18px;color:#8c8c8c">40</div>
<div class="a" style="left:786px;top:355px;font-size:16px;line-height:18px;color:#111">gB</div>
<div class="a cb" style="top:401px"></div>
<svg class="a" style="left:679px;top:402px" width="14" height="14" viewBox="0 0 14 14" fill="none" stroke="#222" stroke-width="1.3"><path d="M2 7l3.500 3.500L12 3"/></svg>
<div class="a pt" style="top:400px">传输速率</div>
<div class="a sep" style="top:422px"></div>
<div class="a pt" style="left:679px;top:428px">最低</div>
<div class="a box" style="top:451px">89.5 MB/秒</div>
<div class="a pt" style="left:679px;top:483px">最高</div>
<div class="a box" style="top:505px">173.7 MB/秒</div>
<div class="a pt" style="left:679px;top:533px">平均</div>
<div class="a box" style="top:555px">121.9 MB/秒</div>
<div class="a sep" style="top:592px"></div>
<div class="a cb" style="top:604px"></div>
<svg class="a" style="left:679px;top:605px" width="14" height="14" viewBox="0 0 14 14" fill="none" stroke="#222" stroke-width="1.3"><path d="M2 7l3.500 3.500L12 3"/></svg>
<div class="a pt" style="top:603px">存取时间</div>
<div class="a box" style="top:626px;color:#ffff2a">16.3 ms</div>
<div class="a cb" style="top:661px"></div>
<svg class="a" style="left:679px;top:662px" width="14" height="14" viewBox="0 0 14 14" fill="none" stroke="#222" stroke-width="1.3"><path d="M2 7l3.500 3.500L12 3"/></svg>
<div class="a pt" style="top:660px">突发传输速率</div>
<div class="a box" style="top:682px;height:22px;color:#fff">182.5 MB/秒</div>

<!-- window border -->
<div class="a" style="left:0;top:0;width:842px;height:1px;background:#444"></div>
<div class="a" style="left:0;top:0;width:1px;height:724px;background:#3a3c40"></div>
<div class="a" style="left:841px;top:0;width:1px;height:724px;background:#444"></div>
<div class="a" style="left:0;top:723px;width:842px;height:1px;background:#2a2a2a"></div>
</body></html>
